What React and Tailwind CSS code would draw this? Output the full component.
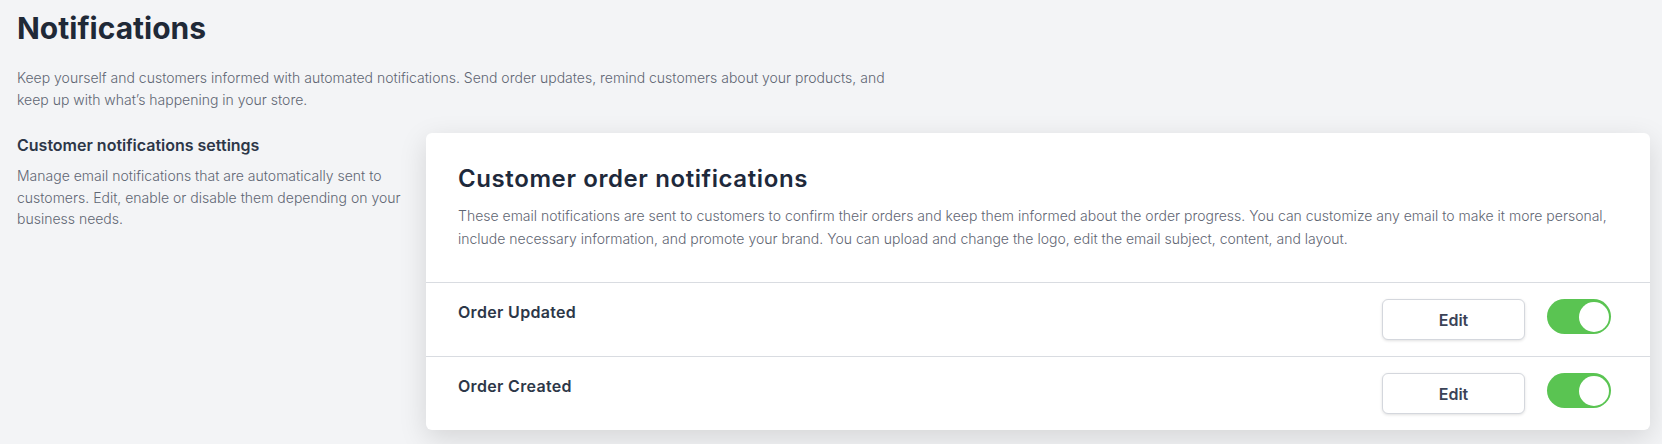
import { useState } from "react";

const font = { fontFamily: "Inter, 'Noto Sans', sans-serif" };

function Toggle({ on, onChange }) {
  return (
    <button
      type="button"
      onClick={onChange}
      className={`flex h-[35px] w-[64px] items-center rounded-full px-[2.5px] ${
        on ? "justify-end bg-[#5ac452]" : "justify-start bg-[#d1d5db]"
      }`}
    >
      <span className="block h-[30px] w-[30px] rounded-full bg-white" />
    </button>
  );
}

function NotificationRow({ label }) {
  const [on, setOn] = useState(true);
  return (
    <div className="flex items-start justify-between border-t border-[#d9dce1] pt-4 pb-4 pl-8 pr-[39px]">
      <div className="pt-[1px] text-[16px] font-semibold leading-6 tracking-[0.02em] text-[#2d3748]">{label}</div>
      <div className="flex items-start gap-[22px]">
        <button
          type="button"
          className="h-[41px] w-[143px] rounded-md border border-[#d4d7dd] bg-white text-[16px] font-semibold text-[#3b4357] shadow-[0_1px_3px_rgba(0,0,0,0.12)]"
        >
          Edit
        </button>
        <Toggle on={on} onChange={() => setOn(!on)} />
      </div>
    </div>
  );
}

export default function App() {
  return (
    <div style={font} className="min-h-[444px] w-full bg-[#f3f4f6] pl-[17px] pr-3 pt-[10px]">
      <h1 className="text-[30px] font-bold leading-9 text-[#1f2937]">Notifications</h1>
      <p className="mt-[21px] max-w-[890px] text-[14px] font-light leading-[22px] text-[#5f6673]">
        Keep yourself and customers informed with automated notifications. Send order updates, remind customers
        about your products, and keep up with what’s happening in your store.
      </p>

      <div className="mt-[22px] flex items-start gap-[19px]">
        <div className="w-[390px] shrink-0">
          <h2 className="text-[16px] font-semibold leading-6 text-[#2d3748]">Customer notifications settings</h2>
          <p className="mt-2 text-[14px] font-light leading-[21.5px] text-[#5f6673]">
            Manage email notifications that are automatically sent to customers. Edit, enable or disable them
            depending on your business needs.
          </p>
        </div>

        <div className="flex-1 rounded-md bg-white shadow-[0_8px_28px_rgba(0,0,0,0.13)]">
          <div className="p-8">
            <h3 className="text-[24px] font-semibold leading-7 tracking-[0.025em] text-[#1e293b]">
              Customer order notifications
            </h3>
            <p className="mt-3 text-[14px] font-light leading-[22.5px] text-[#5f6673]">
              These email notifications are sent to customers to confirm their orders and keep them informed about
              the order progress. You can customize any email to make it more personal, include necessary
              information, and promote your brand. You can upload and change the logo, edit the email subject,
              content, and layout.
            </p>
          </div>
          <NotificationRow label="Order Updated" />
          <NotificationRow label="Order Created" />
        </div>
      </div>
    </div>
  );
}
